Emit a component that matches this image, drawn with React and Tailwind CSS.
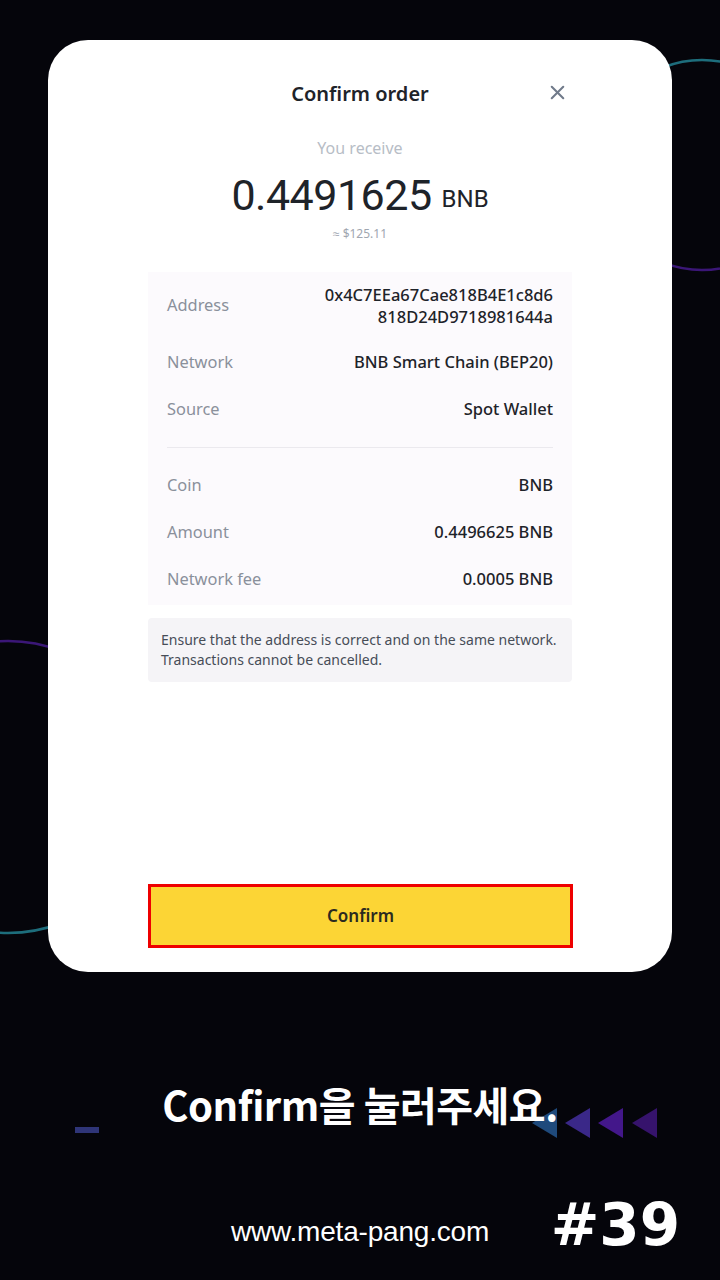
import React from "react";
import { X } from "lucide-react";

const rowsTop = [
  { label: "Network", value: "BNB Smart Chain (BEP20)" },
  { label: "Source", value: "Spot Wallet" },
];

const rowsBottom = [
  { label: "Coin", value: "BNB" },
  { label: "Amount", value: "0.4496625 BNB" },
  { label: "Network fee", value: "0.0005 BNB" },
];

const Row = ({ label, value }) => (
  <div className="flex h-[47px] items-center justify-between">
    <span className="text-[16.4px] text-[#8a909b]">{label}</span>
    <span className="text-[16.5px] font-medium text-[#1e2329]">{value}</span>
  </div>
);

const Decorations = () => (
  <svg className="pointer-events-none absolute inset-0" width="720" height="1280">
    <defs>
      <linearGradient id="ringA" x1="0" y1="0" x2="0" y2="1">
        <stop offset="0" stopColor="#1d6e7c" />
        <stop offset="1" stopColor="#3b1677" />
      </linearGradient>
      <linearGradient id="ringB" x1="0" y1="0" x2="0" y2="1">
        <stop offset="0" stopColor="#3b1677" />
        <stop offset="1" stopColor="#1d6e7c" />
      </linearGradient>
    </defs>
    <circle cx="702" cy="165" r="105" fill="none" stroke="url(#ringA)" strokeWidth="2.5" />
    <circle cx="8" cy="787" r="146" fill="none" stroke="url(#ringB)" strokeWidth="2.5" />
    <rect x="75" y="1127" width="24" height="6" fill="#2f3578" />
    <polygon points="557,1108 532,1123 557,1138" fill="#1f4a7c" />
    <polygon points="590,1108 565,1123 590,1138" fill="#3a2888" />
    <polygon points="623,1108 598,1123 623,1138" fill="#43178a" />
    <polygon points="657,1108 632,1123 657,1138" fill="#36136c" />
  </svg>
);

export default function App() {
  return (
    <div className="relative h-[1280px] w-[720px] overflow-hidden bg-[#05050b]">
      <Decorations />

      <div className="relative mx-[48px] mt-[40px] flex h-[932px] flex-col rounded-[40px] bg-white font-['Noto_Sans',sans-serif]">
        <div className="mx-auto flex w-[424px] flex-1 flex-col pt-[40px] pb-[24px]">
          {/* Header */}
          <div className="relative flex h-[28px] items-center justify-center">
            <h1 className="text-[20px] font-semibold text-[#1e2329]">Confirm order</h1>
            <X className="absolute right-[3px] top-[1px]" size={23} strokeWidth={2.2} color="#707a8a" />
          </div>

          {/* Amount */}
          <p className="mt-[30px] text-center text-[16px] leading-[20px] text-[#b7bdc6]">You receive</p>
          <div className="mt-[13px] flex h-[48px] items-center justify-center gap-[10px] font-['Roboto',sans-serif] leading-[48px] text-[#1e2329]">
            <span className="text-[43px] leading-[48px] tracking-[-0.5px]">0.4491625</span>
            <span className="mt-[8px] text-[24px] leading-[30px]">BNB</span>
          </div>
          <p className="mt-[7px] text-center text-[12px] leading-[16px] text-[#a0a6b0]">≈ $125.11</p>

          {/* Details */}
          <div className="mt-[30px] bg-[#fcfafd] px-[19px] pb-[2px]">
            <div className="flex h-[67px] items-center justify-between">
              <span className="text-[16.4px] text-[#8a909b]">Address</span>
              <span className="text-right text-[16.5px] leading-[22px] font-medium text-[#1e2329]">
                0x4C7EEa67Cae818B4E1c8d6
                <br />
                818D24D9718981644a
              </span>
            </div>
            {rowsTop.map((r) => (
              <Row key={r.label} {...r} />
            ))}
            <div className="mt-[14px] h-px bg-[#ebe9ee]" />
            <div className="mt-[14px]">
              {rowsBottom.map((r) => (
                <Row key={r.label} {...r} />
              ))}
            </div>
          </div>

          {/* Warning */}
          <div className="mt-[13px] flex h-[64px] items-center rounded-[4px] bg-[#f5f4f7] px-[13px]">
            <p className="text-[14px] leading-[20px] text-[#474d57]">
              Ensure that the address is correct and on the same network.
              <br />
              Transactions cannot be cancelled.
            </p>
          </div>

          {/* Confirm */}
          <button className="mt-auto flex h-[64px] w-[425px] items-center justify-center border-[3px] border-[#ee0000] bg-[#fcd535] text-[17px] font-semibold text-[#2b2a1f]">
            Confirm
          </button>
        </div>
      </div>

      {/* Caption */}
      <p className="relative mt-[110px] text-center font-['Noto_Sans_CJK_KR',sans-serif] text-[40px] leading-[44px] font-bold tracking-[-0.5px] text-white">
        Confirm을 눌러주세요.
      </p>

      {/* Footer */}
      <div className="relative mt-[84px] grid grid-cols-[1fr_auto_1fr] items-center">
        <div />
        <span className="font-['Liberation_Sans',sans-serif] text-[28px] tracking-[-0.2px] text-white">www.meta-pang.com</span>
        <div className="flex justify-end pr-[40px]">
          <span className="-mt-[14px] font-['DejaVu_Sans',sans-serif] text-[58px] leading-none font-black text-white">#39</span>
        </div>
      </div>
    </div>
  );
}
